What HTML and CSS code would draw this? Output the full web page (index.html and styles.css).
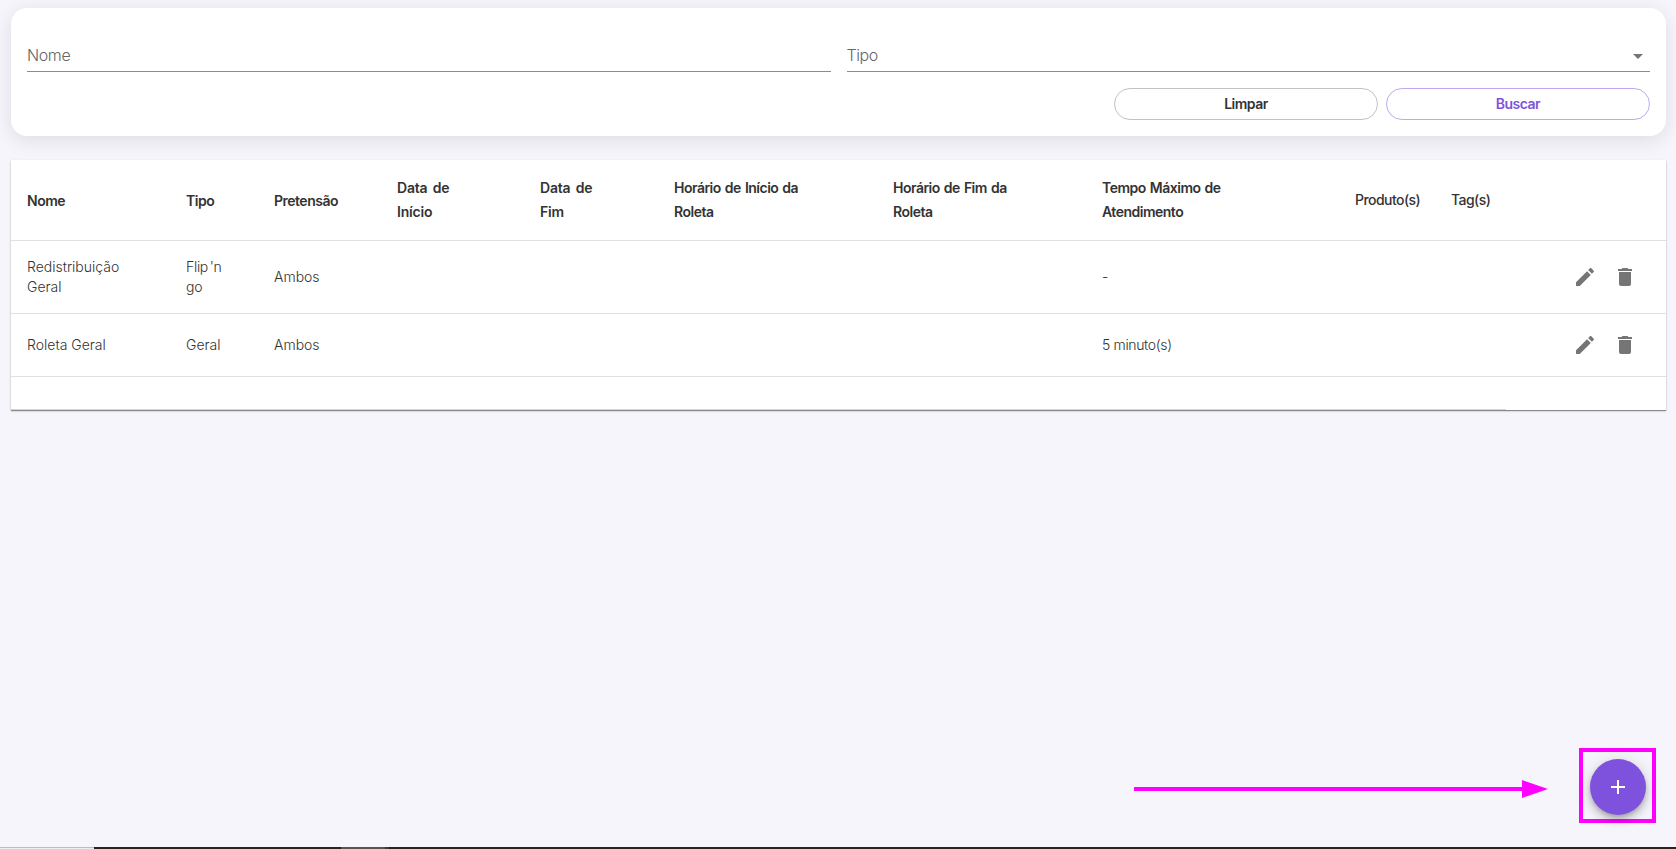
FILE: index.html
```
<!DOCTYPE html>
<html lang="pt-BR">
<head>
  <meta charset="UTF-8" />
  <meta name="viewport" content="width=device-width, initial-scale=1.0"/>
  <title>Roletas</title>
  <link rel="stylesheet" href="styles.css">
</head>
<body>
  <svg class="sprite">
    <symbol id="icon-edit" viewBox="0 0 24 24">
      <path d="M3 17.25V21h3.75L17.81 9.94l-3.75-3.75L3 17.25zM20.71 7.04c.39-.39.39-1.02 0-1.41l-2.34-2.34c-.39-.39-1.02-.39-1.41 0l-1.83 1.83 3.75 3.75 1.83-1.83z"/>
    </symbol>
    <symbol id="icon-delete" viewBox="0 0 24 24">
      <path d="M6 19c0 1.1.9 2 2 2h8c1.1 0 2-.9 2-2V7H6v12zM19 4h-3.5l-1-1h-5l-1 1H5v2h14V4z"/>
    </symbol>
  </svg>

  <main class="page">
    <form class="filter-card">
      <div class="fields">
        <div class="field"><span class="label">Nome</span></div>
        <div class="field"><span class="label">Tipo</span><span class="arrow"></span></div>
      </div>
      <div class="buttons">
        <button type="button" class="btn">Limpar</button>
        <button type="button" class="btn btn-primary">Buscar</button>
      </div>
    </form>

    <div class="table-card">
      <table>
        <colgroup>
          <col class="c-nome"><col class="c-tipo"><col class="c-pretensao"><col class="c-inicio"><col class="c-fim">
          <col class="c-hinicio"><col class="c-hfim"><col class="c-tempo"><col class="c-produto"><col class="c-tag"><col class="c-acoes">
        </colgroup>
        <thead>
          <tr>
            <th class="sort">Nome</th>
            <th class="sort">Tipo</th>
            <th class="sort">Pretensão</th>
            <th class="date">Data de<br>Início</th>
            <th class="date">Data de<br>Fim</th>
            <th>Horário de Início da<br>Roleta</th>
            <th>Horário de Fim da<br>Roleta</th>
            <th>Tempo Máximo de<br>Atendimento</th>
            <th class="plain">Produto(s)</th>
            <th class="plain">Tag(s)</th>
            <th></th>
          </tr>
        </thead>
        <tbody>
          <tr class="tall">
            <td>Redistribuição<br>Geral</td>
            <td class="type">Flip 'n<br>go</td>
            <td>Ambos</td>
            <td></td>
            <td></td>
            <td></td>
            <td></td>
            <td>-</td>
            <td></td>
            <td></td>
            <td>
              <div class="actions">
                <svg><use href="#icon-edit"/></svg>
                <svg><use href="#icon-delete"/></svg>
              </div>
            </td>
          </tr>
          <tr>
            <td>Roleta Geral</td>
            <td>Geral</td>
            <td>Ambos</td>
            <td></td>
            <td></td>
            <td></td>
            <td></td>
            <td class="time">5 minuto(s)</td>
            <td></td>
            <td></td>
            <td>
              <div class="actions">
                <svg><use href="#icon-edit"/></svg>
                <svg><use href="#icon-delete"/></svg>
              </div>
            </td>
          </tr>
        </tbody>
      </table>
      <div class="table-footer"><div class="scroll-line"></div></div>
    </div>
  </main>

  <svg class="pointer" viewBox="0 0 414 18">
    <path d="M0 7h388V0l26 9-26 9v-7H0z"/>
  </svg>

  <div class="highlight">
    <button type="button" class="fab">
      <svg viewBox="0 0 24 24"><path d="M19 13h-6v6h-2v-6H5v-2h6V5h2v6h6v2z"/></svg>
    </button>
  </div>

  <div class="taskbar">
    <div class="search"></div>
    <div class="active"></div>
    <div class="edge"></div>
  </div>
</body>
</html>
```
FILE: styles.css
```
* { box-sizing: border-box; }

body {
  margin: 0;
  height: 849px;
  overflow: hidden;
  font-family: Inter, "Open Sans", sans-serif;
  font-size: 14px;
  font-weight: 300;
  color: #333;
  background: #f5f5fb;
}

.sprite {
  display: none;
}

.page {
  padding: 8px 10px 0 11px;
}

.filter-card {
  height: 128px;
  padding: 32px 16px 16px;
  background: #fff;
  border-radius: 16px;
  box-shadow: 0 4px 20px rgba(0,0,0,0.1);
}

.fields {
  display: flex;
  gap: 16px;
}

.field {
  flex: 1;
  display: flex;
  justify-content: space-between;
  align-items: center;
  height: 32px;
  padding-right: 7px;
  border-bottom: 1px solid #8c8c8c;
  font-size: 16px;
  color: #666;
}

.label {
  padding-bottom: 2px;
  letter-spacing: -0.4px;
}

.arrow {
  margin-top: 2px;
  border: 5px solid transparent;
  border-top-color: #757575;
  border-bottom: 0;
}

.buttons {
  display: flex;
  justify-content: flex-end;
  gap: 8px;
  margin-top: 16px;
}

.btn {
  width: 264px;
  height: 32px;
  padding: 0 0 2px;
  border: 1px solid #c2c2c2;
  border-radius: 16px;
  background: #fff;
  font-family: inherit;
  font-size: 14px;
  font-weight: 600;
  letter-spacing: -0.5px;
  color: #333;
}

.btn-primary {
  border-color: #bfa8ef;
  color: #7f52dd;
}

.table-card {
  height: 250px;
  margin-top: 24px;
  background: #fff;
  box-shadow: 0 1px 1px rgba(0,0,0,0.4), 0 1px 3px rgba(0,0,0,0.1);
}

table {
  width: 100%;
  table-layout: fixed;
  border-collapse: separate;
  border-spacing: 0;
}

.c-nome { width: 159px; }
.c-tipo { width: 88px; }
.c-pretensao { width: 123px; }
.c-inicio { width: 143px; }
.c-fim { width: 134px; }
.c-hinicio { width: 219px; }
.c-hfim { width: 209px; }
.c-tempo { width: 253px; }
.c-produto { width: 96px; }
.c-tag { width: 114px; }
.c-acoes { width: 117px; }

th, td {
  padding: 0 0 0 16px;
  text-align: left;
  white-space: nowrap;
  border-bottom: 1px solid #e0e0e0;
}

th {
  height: 81px;
  font-weight: 600;
  line-height: 24px;
  letter-spacing: -0.5px;
  word-spacing: 1px;
}

.sort {
  padding-top: 2px;
}

.date {
  letter-spacing: -0.2px;
  word-spacing: 2px;
}

.plain {
  font-weight: 500;
  letter-spacing: -0.55px;
}

td {
  height: 63px;
  line-height: 20px;
}

.tall td {
  height: 73px;
}

.type {
  letter-spacing: -0.3px;
  word-spacing: -2px;
}

.time {
  letter-spacing: -0.35px;
}

.actions {
  display: flex;
  gap: 16px;
  padding-left: 8px;
}

.actions svg {
  width: 24px;
  height: 24px;
  fill: #757575;
}

.table-footer {
  display: flex;
  align-items: flex-end;
  height: 33px;
}

.scroll-line {
  width: 1495px;
  height: 1px;
  background: #d5d5d5;
}

.pointer {
  position: absolute;
  left: 1134px;
  top: 780px;
  width: 414px;
  height: 18px;
  fill: #f0f;
}

.highlight {
  position: absolute;
  left: 1579px;
  top: 748px;
  width: 77px;
  height: 75px;
  padding: 7px;
  border: 4px solid #f0f;
}

.fab {
  display: flex;
  align-items: center;
  justify-content: center;
  width: 56px;
  height: 56px;
  padding: 0;
  border: none;
  border-radius: 50%;
  background: #7f52dd;
  box-shadow: 0 3px 5px -1px rgba(0,0,0,0.2), 0 6px 10px rgba(0,0,0,0.14), 0 1px 18px rgba(0,0,0,0.12);
}

.fab svg {
  width: 24px;
  height: 24px;
  fill: #fff;
}

.taskbar {
  position: absolute;
  left: 0;
  bottom: 0;
  display: flex;
  width: 100%;
  height: 2px;
  background: #30201c;
}

.search {
  width: 94px;
  margin-right: 247px;
  border-top: 1px solid #bcbcbc;
  background: #eee;
}

.active {
  width: 44px;
  background: #62504e;
}

.edge {
  width: 4px;
  background: #463532;
}
```
